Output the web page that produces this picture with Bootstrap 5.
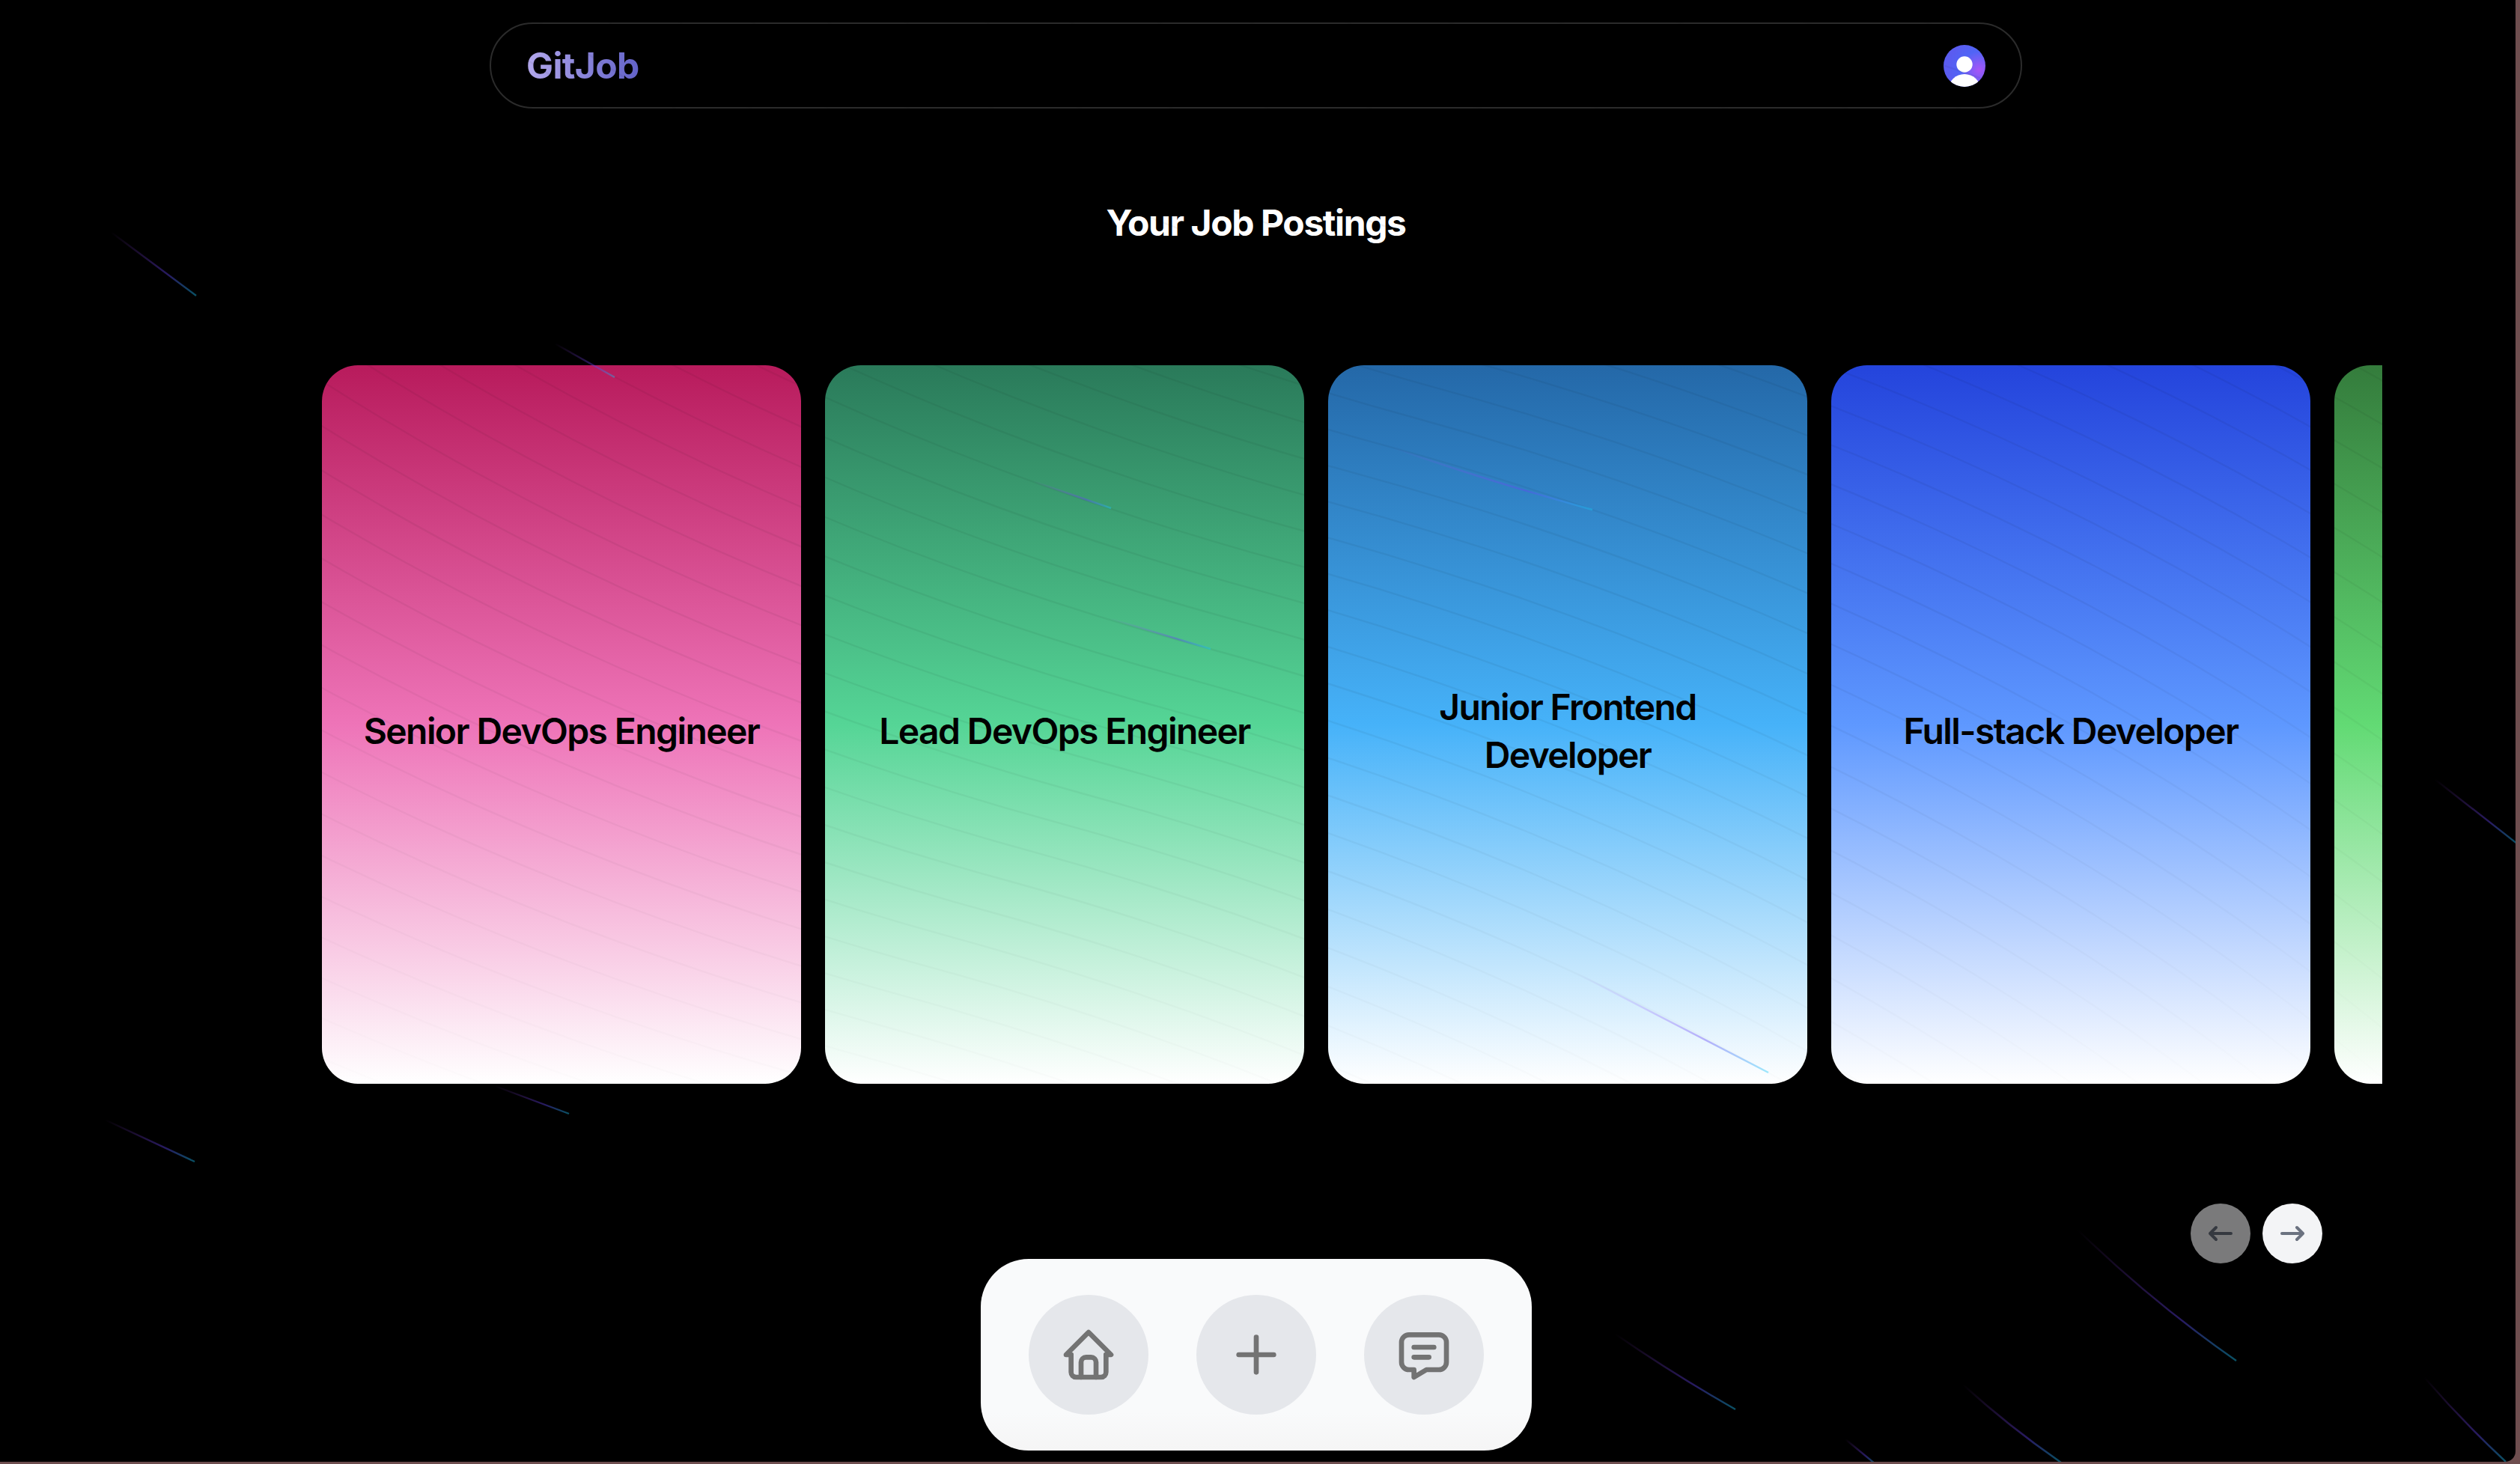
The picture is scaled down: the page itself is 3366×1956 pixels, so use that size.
<!DOCTYPE html>
<html lang="en">
<head>
<meta charset="utf-8">
<title>GitJob</title>
<link href="https://cdn.jsdelivr.net/npm/bootstrap@5.3.0/dist/css/bootstrap.min.css" rel="stylesheet">
<style>
html,body{height:100%;margin:0;overflow:hidden;background:#6e4e4f}
body{font-family:Inter,"Liberation Sans",sans-serif;width:3366px;height:1956px}
.app-window{position:relative;width:3360px;height:1953px;background:#000;border-bottom-right-radius:14px;overflow:hidden}
.page-shell{width:3355px;height:1953px;padding-top:30px}
.top-pill{width:2047px;height:115px;margin:0 auto;border:2px solid #2b2b2b;border-radius:58px;padding:0 47px}
.brand-word{font-size:48px;font-weight:700;line-height:1;letter-spacing:-.6px;background:linear-gradient(90deg,#b3a8ec,#6262c8);-webkit-background-clip:text;background-clip:text;color:transparent}
.avatar-dot{width:56px;height:56px;display:block}
.page-title{font-size:48px;font-weight:700;line-height:64px;color:#fff;margin:121px 0 0;letter-spacing:-1.4px}
.track-clip{width:2752px;margin:158px 0 0 430px;overflow:hidden}
.track-row{gap:32px;width:max-content}
.job-tile{width:640px;height:960px;border-radius:48px;padding:18px 40px 0;font-size:48px;font-weight:600;line-height:64px;color:#000;text-align:center;letter-spacing:-1.6px}
.tile-pink{background:linear-gradient(180deg,#b81b5c 0%,#ee74b8 50%,#fff 100%)}
.tile-emerald{background:linear-gradient(180deg,#2a7a5a 0%,#55d596 50%,#fff 100%)}
.tile-sky{background:linear-gradient(180deg,#2468a8 0%,#46b2f9 50%,#fff 100%)}
.tile-royal{background:linear-gradient(180deg,#2444dc 0%,#5e98ff 50%,#fff 100%)}
.tile-leaf{background:linear-gradient(180deg,#347c3c 0%,#62da74 50%,#fff 100%)}
.pager-row{width:176px;gap:16px;margin:160px 0 0 2926px}
.pager-btn{width:80px;height:80px;border-radius:50%;border:0;padding:0;background:#f3f4f6;color:#6b7280}
.pager-off{opacity:.5}
.dock-panel{position:relative;z-index:2;width:736px;height:256px;margin:-6px auto 0;border-radius:64px;background:linear-gradient(180deg,#f9fafb 80%,#f5f5f5);gap:64px}
.dock-btn{width:160px;height:160px;border-radius:50%;background:#e5e7eb;color:#737373}
.beam-layer{position:absolute;left:0;top:0;width:3366px;height:1956px;pointer-events:none;z-index:1}
</style>
</head>
<body>
<div class="app-window">
<div class="page-shell">
  <nav class="top-pill d-flex align-items-center justify-content-between">
    <span class="brand-word">GitJob</span>
    <svg class="avatar-dot" viewBox="0 0 56 56"><defs><radialGradient id="av" cx=".85" cy=".6" r=".75"><stop offset="0" stop-color="#a855f7"/><stop offset=".6" stop-color="#5065f6"/><stop offset="1" stop-color="#5a5cf0"/></radialGradient><clipPath id="avc"><circle cx="28" cy="28" r="28"/></clipPath></defs><circle cx="28" cy="28" r="28" fill="url(#av)"/><g clip-path="url(#avc)" fill="#fff"><circle cx="28" cy="26" r="10.7"/><ellipse cx="28" cy="59" rx="21" ry="20"/></g></svg>
  </nav>
  <h1 class="page-title text-center">Your Job Postings</h1>
  <div class="track-clip">
    <div class="track-row d-flex">
      <div class="job-tile tile-pink d-flex align-items-center justify-content-center">Senior DevOps Engineer</div>
      <div class="job-tile tile-emerald d-flex align-items-center justify-content-center">Lead DevOps Engineer</div>
      <div class="job-tile tile-sky d-flex align-items-center justify-content-center">Junior Frontend Developer</div>
      <div class="job-tile tile-royal d-flex align-items-center justify-content-center">Full-stack Developer</div>
      <div class="job-tile tile-leaf d-flex align-items-center justify-content-center"></div>
    </div>
  </div>
  <div class="pager-row d-flex">
    <button class="pager-btn pager-off d-flex align-items-center justify-content-center" aria-label="Previous"><svg width="48" height="48" viewBox="0 0 24 24" fill="none" stroke="currentColor" stroke-width="2" stroke-linecap="round" stroke-linejoin="round"><path d="M5 12h14M5 12l4 4M5 12l4-4"/></svg></button>
    <button class="pager-btn d-flex align-items-center justify-content-center" aria-label="Next"><svg width="48" height="48" viewBox="0 0 24 24" fill="none" stroke="currentColor" stroke-width="2" stroke-linecap="round" stroke-linejoin="round"><path d="M5 12h14M15 16l4-4M15 8l4 4"/></svg></button>
  </div>
  <div class="dock-panel d-flex align-items-center justify-content-center">
    <div class="dock-btn d-flex align-items-center justify-content-center"><svg width="80" height="80" viewBox="0 0 24 24" fill="none" stroke="currentColor" stroke-width="2" stroke-linecap="round" stroke-linejoin="round"><path d="M5 12H3l9-9 9 9h-2"/><path d="M5 12v7a2 2 0 0 0 2 2h10a2 2 0 0 0 2-2v-7"/><path d="M9 21v-6a2 2 0 0 1 2-2h2a2 2 0 0 1 2 2v6"/></svg></div>
    <div class="dock-btn d-flex align-items-center justify-content-center"><svg width="80" height="80" viewBox="0 0 24 24" fill="none" stroke="currentColor" stroke-width="2" stroke-linecap="round" stroke-linejoin="round"><path d="M12 5v14M5 12h14"/></svg></div>
    <div class="dock-btn d-flex align-items-center justify-content-center"><svg width="80" height="80" viewBox="0 0 24 24" fill="none" stroke="currentColor" stroke-width="2" stroke-linecap="round" stroke-linejoin="round"><path d="M8 9h8M8 13h6"/><path d="M18 4a3 3 0 0 1 3 3v8a3 3 0 0 1-3 3h-5l-5 3v-3H6a3 3 0 0 1-3-3V7a3 3 0 0 1 3-3h12z"/></svg></div>
  </div>
</div>
<svg class="beam-layer" id="beams" viewBox="0 0 3366 1956" fill="none"></svg>
</div>
<script>
var s='<defs><radialGradient id="rg" cx="0" cy="0" r="1" gradientUnits="userSpaceOnUse" gradientTransform="translate(352 34) rotate(90) scale(555 1560.62)"><stop offset=".0667" stop-color="#000"/><stop offset=".2" stop-color="#000"/><stop offset=".46" stop-color="#000" stop-opacity="0"/></radialGradient>';
var d='',k=3366/696,oy=(1956-316*k)/2;
for(var i=0;i<50;i++){var a=7*i,b=8*i;d+='M'+(-380+a)+' '+(-189-b)+'C'+(-380+a)+' '+(-189-b)+' '+(-312+a)+' '+(216-b)+' '+(152+a)+' '+(343-b)+'C'+(616+a)+' '+(470-b)+' '+(684+a)+' '+(875-b)+' '+(684+a)+' '+(875-b);}
var beams=[[148,310,262,395,0],[741,459,821,504,0],[1380,643,1484,679,0],[1481,826,1617,867,0],[1860,598,2127,681,-4],[2105,1300,2362,1433,0],[2775,1643,2987,1818,-8],[2157,1782,2318,1883,-3],[2622,1850,2753,1954,-4],[2465,1923,2505,1956,0],[3238,1840,3347,1953,-3],[3252,1041,3362,1127,0],[661,1451,760,1488,0],[140,1496,260,1552,0]];
var b2='';
beams.forEach(function(q,n){
  s+='<linearGradient id="bm'+n+'" gradientUnits="userSpaceOnUse" x1="'+q[2]+'" y1="'+q[3]+'" x2="'+q[0]+'" y2="'+q[1]+'"><stop offset="0" stop-color="#18ccfc"/><stop offset=".325" stop-color="#6344f5"/><stop offset="1" stop-color="#ae48ff" stop-opacity="0"/></linearGradient>';
  var mx=(q[0]+q[2])/2+q[4],my=(q[1]+q[3])/2-q[4];
  b2+='<path d="M'+q[0]+' '+q[1]+'Q'+mx+' '+my+' '+q[2]+' '+q[3]+'" stroke="url(#bm'+n+')" stroke-opacity=".4" stroke-width="2.4"/>';
});
s+='</defs><g transform="translate(0 '+oy+') scale('+k+')"><path d="'+d+'" stroke="url(#rg)" stroke-opacity=".05" stroke-width=".5"/></g>'+b2;
document.getElementById('beams').innerHTML=s;
</script>
<script src="https://cdn.jsdelivr.net/npm/bootstrap@5.3.0/dist/js/bootstrap.bundle.min.js"></script>
</body>
</html>
